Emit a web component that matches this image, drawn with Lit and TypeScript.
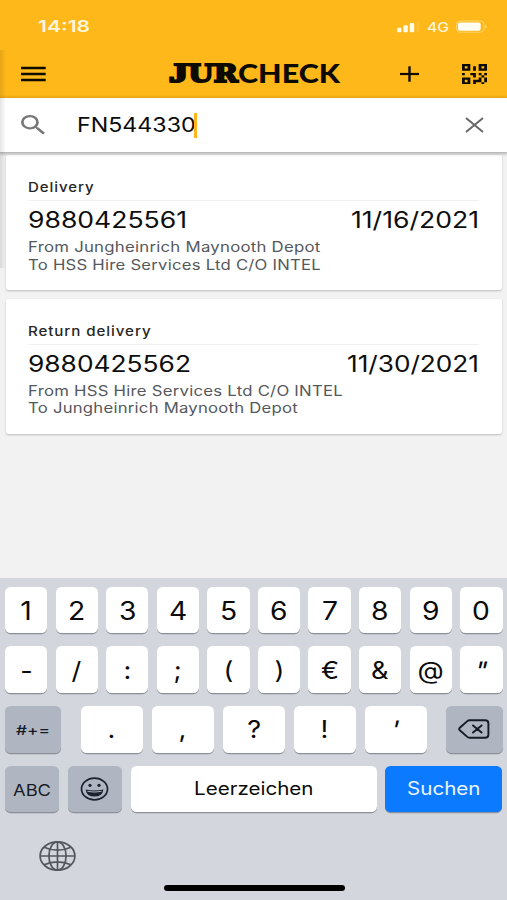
import { LitElement, html, svg, css } from "lit";
import { customElement, property } from "lit/decorators.js";

/* A single line of text fitted to a given width. */
@customElement("fit-text")
class FitText extends LitElement {
  @property() text = "";
  @property({ type: Number }) width = 100;
  @property({ type: Number }) height = 20;
  @property({ type: Number }) base = 15;
  static styles = css`
    :host { display: block; flex: none; }
    svg { display: block; overflow: visible; }
    text { fill: currentColor; white-space: pre; }
  `;
  render() {
    return html`<svg width=${this.width} height=${this.height}>
      <text x="0" y=${this.base} textLength=${this.width} lengthAdjust="spacingAndGlyphs">${this.text}</text>
    </svg>`;
  }
}

@customElement("status-bar")
class StatusBar extends LitElement {
  static styles = css`
    :host { display: flex; height: 50px; padding: 0 20px 0 38px; justify-content: space-between; color: #fff6dd; }
    .time { font-size: 16px; font-weight: 600; }
    .right { display: flex; }
    .net { font-size: 13px; font-weight: 500; margin: 0 7px 0 7.5px; }
    svg { display: block; }
  `;
  render() {
    return html`
      <fit-text class="time" text="14:18" width="52" height="50" base="32.4"></fit-text>
      <div class="right">
        <svg width="23" height="50" fill="#fffbe9">
          <rect x="0" y="27.7" width="4.4" height="4.6" rx="1" />
          <rect x="6.4" y="25.3" width="4.4" height="7" rx="1" />
          <rect x="12.8" y="22.9" width="4.4" height="9.4" rx="1" />
          <rect x="19.4" y="21" width="3" height="11.3" rx="1" opacity=".1" />
        </svg>
        <fit-text class="net" text="4G" width="22" height="50" base="31.6"></fit-text>
        <svg width="31" height="50">
          <rect x=".4" y="21" width="27.6" height="11.2" rx="3.4" fill="none" stroke="#ffd876" stroke-width=".9" />
          <rect x="1.9" y="22.5" width="22.8" height="8.2" rx="2" fill="#fffdf2" />
          <path d="M29.3 24.8q2.4 1.8 0 3.6z" fill="#ffe09a" />
        </svg>
      </div>`;
  }
}

@customElement("title-bar")
class TitleBar extends LitElement {
  static styles = css`
    :host { display: grid; grid-template-columns: 169px 1fr 19px 25px; height: 48.3px; padding: 0 20px 0 0; color: #0d0a02; }
    svg { display: block; }
    .menu { margin-left: 21px; }
    .logo { display: flex; }
    .jay { font: 700 26.5px "Liberation Serif", serif; stroke: #0d0a02; stroke-width: 2.2px; }
    .jur { font: 700 24.3px "DejaVu Serif", serif; stroke: #0d0a02; stroke-width: 1.9px; }
    .check { font: 900 26px Lato, sans-serif; }
    .plus { margin-left: -43px; }
    .qr { margin-top: 13.7px; }
  `;
  render() {
    return html`
      <svg class="menu" width="25" height="48" stroke="currentColor" stroke-width="2.3">
        <path d="M0 18h24.7M0 24h24.7M0 30h24.7" />
      </svg>
      <div class="logo">
        <fit-text class="jay" text="J" width="19" height="48" base="32.2"></fit-text>
        <fit-text class="jur" text="UR" width="50" height="48" base="32.2"></fit-text>
        <fit-text class="check" text="CHECK" width="102" height="48" base="33.1"></fit-text>
      </div>
      <svg class="plus" width="19" height="48" stroke="currentColor" fill="none">
        <path d="M0 24h19" stroke-width="2.2" /><path d="M9.5 16.3v15.4" stroke-width="2.4" />
      </svg>
      <svg class="qr" width="25" height="20.4" viewBox="3 3 18 18" preserveAspectRatio="none" fill="currentColor">
        <path d="M3,11H5V13H3V11M11,5H13V9H11V5M9,11H13V15H11V13H9V11M15,11H17V13H19V11H21V13H19V15H21V19H19V21H17V19H13V21H11V17H15V15H17V13H15V11M19,19V15H17V19H19M15,3H21V9H15V3M17,5V7H19V5H17M3,3H9V9H3V3M5,5V7H7V5H5M3,15H9V21H3V15M5,17V19H7V17H5Z" />
      </svg>`;
  }
}

@customElement("search-bar")
class SearchBar extends LitElement {
  static styles = css`
    :host { display: flex; align-items: center; height: 53.7px; padding: 0 23px 0 21px; background: #fff; color: #0c0c0c; box-shadow: 0 1px 3px 1px rgba(0,0,0,.28); }
    svg { display: block; }
    .query { font-size: 20px; margin-left: 31.5px; }
    .caret { width: 2.4px; height: 25px; background: #fdb51b; margin-left: -1px; }
    .clear { margin-left: auto; }
  `;
  render() {
    return html`
      <svg width="24" height="19.4" viewBox="3 3 17.5 17.5" preserveAspectRatio="none" fill="#777">
        <path d="M15.5 14h-.79l-.28-.27A6.47 6.47 0 0 0 16 9.5 6.5 6.5 0 1 0 9.5 16c1.61 0 3.09-.59 4.23-1.57l.27.28v.79l5 4.99L20.49 19l-4.99-5zm-6 0C7.01 14 5 11.99 5 9.5S7.01 5 9.5 5 14 7.01 14 9.5 11.99 14 9.5 14z" />
      </svg>
      <fit-text class="query" text="FN544330" width="118.7" height="54" base="34.4"></fit-text>
      <div class="caret"></div>
      <svg class="clear" width="19" height="16" fill="none" stroke="#686868" stroke-width="2"><path d="M1 .9L18 15.1M18 .9L1 15.1" /></svg>`;
  }
}

interface Line { text: string; width: number; }
interface Delivery { kind: Line; no: Line; date: Line; from: Line; to: Line; }

@customElement("delivery-card")
class DeliveryCard extends LitElement {
  @property({ attribute: false }) data!: Delivery;
  static styles = css`
    :host { display: block; height: 134.6px; box-sizing: border-box; padding: 18px 22.5px 0 21.5px; background: #fff; border-radius: 2px; box-shadow: 0 1px 2px rgba(0,0,0,.22); color: #0e0e0e; }
    .kind { font-size: 13px; font-weight: 500; letter-spacing: .8px; border-bottom: 1px solid #f0f0f0; height: 27px; color: #262626; }
    .main { display: flex; justify-content: space-between; font-size: 22.4px; height: 37px; }
    .route { font-size: 14px; letter-spacing: .2px; color: #55585c; }
  `;
  private line(l: Line, height: number, base: number) {
    return html`<fit-text text=${l.text} width=${l.width} height=${height} base=${base}></fit-text>`;
  }
  render() {
    const d = this.data;
    return html`
      <div class="kind">${this.line(d.kind, 27, 18.5)}</div>
      <div class="main">${this.line(d.no, 37, 26.9)}${this.line(d.date, 37, 26.9)}</div>
      <div class="route">${this.line(d.from, 17.4, 14.3)}${this.line(d.to, 17.4, 14.1)}</div>`;
  }
}

const globe = svg`<svg width="37" height="30" viewBox="0 0 37 30" fill="none" stroke="#53575d" stroke-width="1.7">
  <ellipse cx="18.5" cy="15" rx="17.4" ry="14.1"/><ellipse cx="18.5" cy="15" rx="8.6" ry="14.1"/>
  <path d="M18.5 1v28M1 15h35M5 6.2q13.5 6 27 0M5 23.8q13.5-6 27 0"/></svg>`;
const smiley = svg`<svg width="29" height="24" viewBox="0 0 29 24">
  <ellipse cx="14.5" cy="12" rx="13" ry="10.8" fill="none" stroke="#1c2230" stroke-width="1.7"/>
  <ellipse cx="10" cy="8.3" rx="1.6" ry="1.6" fill="#1c2230"/><ellipse cx="19" cy="8.3" rx="1.6" ry="1.6" fill="#1c2230"/>
  <path d="M5.6 12.4q8.9 2 17.8 0q-.9 7.2-8.9 7.2t-8.9-7.2z" fill="#1c2230"/>
  <path d="M7.2 13.7q7.3 1.4 14.6 0l-.4 1q-6.9 1.4-13.8 0z" fill="#b0b6c1"/></svg>`;
const erase = svg`<svg width="32" height="20" viewBox="0 0 32 20" fill="none" stroke="#161b26" stroke-width="1.9" stroke-linejoin="round" stroke-linecap="round">
  <path d="M11.5 1.2H27q3.4 0 3.4 3v11.6q0 3-3.4 3H11.5q-1.2 0-2.2-.9L1.8 11.2q-1.3-1.2 0-2.4L9.3 2.1q1-.9 2.2-.9z"/><path d="M15 6.4l8.6 7.2M23.6 6.4L15 13.6"/></svg>`;

@customElement("key-board")
class KeyBoard extends LitElement {
  static styles = css`
    :host { display: block; height: 322.5px; box-sizing: border-box; background: #d3d6dc; padding: 9px 4.5px 0 5px; color: #0b0b0b; }
    .row { display: flex; justify-content: space-between; height: 46.3px; margin-bottom: 13.6px; }
    .key { box-sizing: border-box; width: 42.3px; border-radius: 5.5px; background: #fff; box-shadow: 0 1.2px .6px rgba(70,74,82,.5); display: flex; justify-content: center; align-items: center; font-size: 25px; line-height: 46px; }
    .glyph { display: block; transform: scaleX(1.13); padding-top: 2px; }
    .sym { font-size: 24px; }
    .slant { transform: scaleX(1.15) skewX(-12deg); }
    .comma { transform: scaleX(1.15); }
    .wide { width: 62.5px; }
    .group { display: flex; gap: 8.5px; }
    .dark { background: #b0b6c1; color: #161b26; }
    .mod { width: 56.4px; }
    .alt { font-size: 13.5px; font-weight: 500; }
    .abc { width: 54.3px; font-size: 16px; }
    .face { width: 54.8px; }
    .space { width: 246px; font-size: 18px; }
    .go { width: 117.6px; font-size: 18px; background: #0b7aff; color: #eaf5ff; }
    .foot { padding: 14.8px 0 0 34px; height: 30px; }
    .home { width: 181px; height: 6px; border-radius: 3px; background: #000; margin: 14.2px auto 0 159px; }
    svg { display: block; }
  `;
  private key(c: string, cls = "") {
    const shape = c === "'" || c === '"' ? "slant" : c === "," ? "comma" : "";
    return html`<div class="key ${cls}"><span class="glyph ${shape}">${c}</span></div>`;
  }
  render() {
    return html`
      <div class="row">${[..."1234567890"].map((c) => this.key(c))}</div>
      <div class="row">${[..."-/:;()€&@\""].map((c) => this.key(c, "sym"))}</div>
      <div class="row">
        <div class="key dark mod alt"><fit-text text="#+=" width="34" height="46" base="28.5"></fit-text></div>
        <div class="group">${[...".,?!'"].map((c) => this.key(c, "sym wide"))}</div>
        <div class="key dark mod">${erase}</div>
      </div>
      <div class="row">
        <div class="key dark abc"><fit-text text="ABC" width="38" height="46" base="29.9"></fit-text></div>
        <div class="key dark face">${smiley}</div>
        <div class="key space"><fit-text text="Leerzeichen" width="119.5" height="46" base="29"></fit-text></div>
        <div class="key go"><fit-text text="Suchen" width="73.5" height="46" base="29"></fit-text></div>
      </div>
      <div class="foot">${globe}</div>
      <div class="home"></div>`;
  }
}

@customElement("app-root")
class AppRoot extends LitElement {
  static styles = css`
    :host { display: flex; flex-direction: column; position: relative; width: 507px; height: 900px; overflow: hidden; background: #f2f2f2; font-family: Inter, "Liberation Sans", sans-serif; }
    .head { background: #ffb819; flex: none; }
    search-bar { flex: none; position: relative; }
    .list { flex: 1; display: flex; flex-direction: column; gap: 9px; padding: 3.5px 5.5px 0 6.4px; }
    .edge { position: absolute; left: 0; top: 50px; width: 6px; height: 218px; background: linear-gradient(90deg, rgba(0,0,0,.1), rgba(0,0,0,0)); }
  `;
  private items: Delivery[] = [
    {
      kind: { text: "Delivery", width: 66.5 },
      no: { text: "9880425561", width: 159 },
      date: { text: "11/16/2021", width: 128 },
      from: { text: "From Jungheinrich Maynooth Depot", width: 292.5 },
      to: { text: "To HSS Hire Services Ltd C/O INTEL", width: 293 },
    },
    {
      kind: { text: "Return delivery", width: 123.5 },
      no: { text: "9880425562", width: 163 },
      date: { text: "11/30/2021", width: 132 },
      from: { text: "From HSS Hire Services Ltd C/O INTEL", width: 315 },
      to: { text: "To Jungheinrich Maynooth Depot", width: 270 },
    },
  ];
  render() {
    return html`
      <div class="head"><status-bar></status-bar><title-bar></title-bar></div>
      <search-bar></search-bar>
      <div class="list">${this.items.map((d) => html`<delivery-card .data=${d}></delivery-card>`)}</div>
      <key-board></key-board>
      <div class="edge"></div>`;
  }
}
